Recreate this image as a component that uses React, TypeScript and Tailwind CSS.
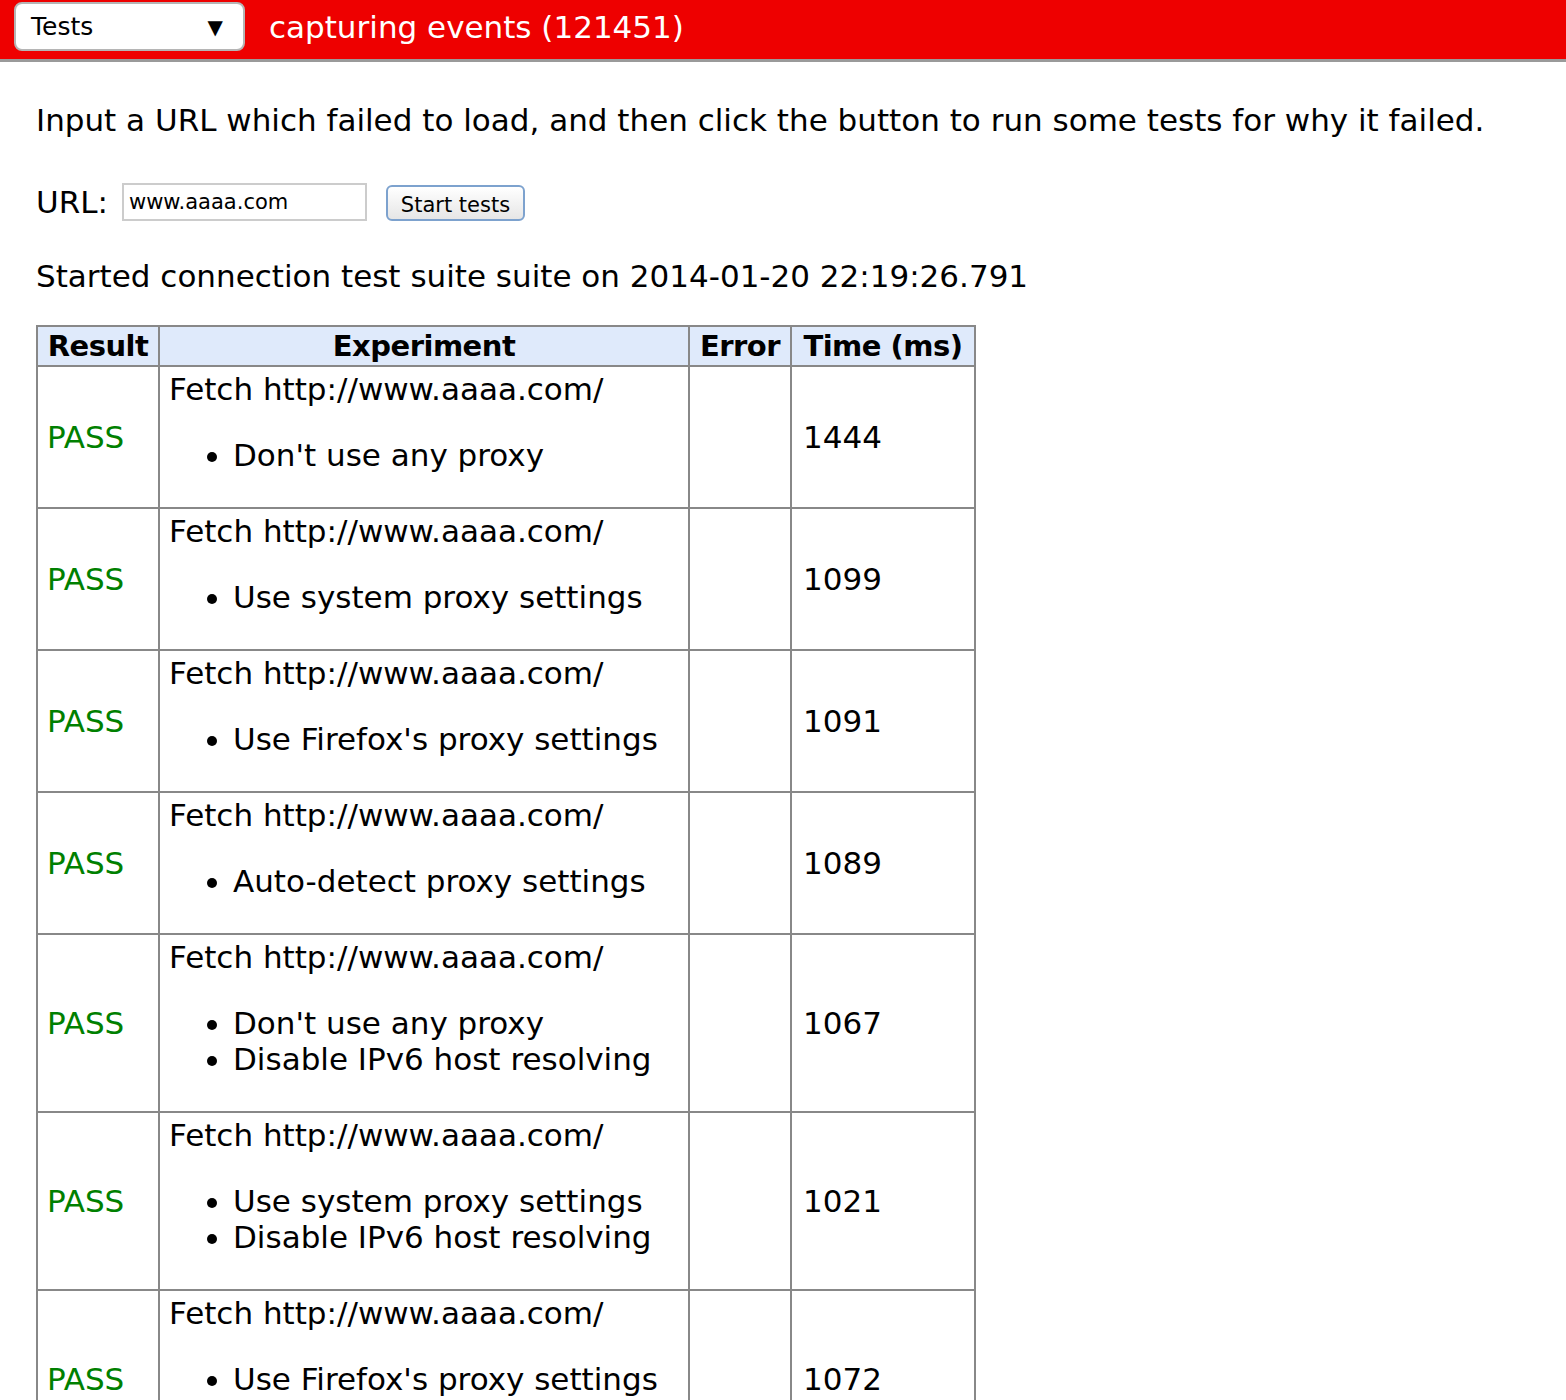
import React from 'react'

const ROWS: { opts: string[]; time: string }[] = [
  { opts: ["Don't use any proxy"], time: '1444' },
  { opts: ['Use system proxy settings'], time: '1099' },
  { opts: ["Use Firefox's proxy settings"], time: '1091' },
  { opts: ['Auto-detect proxy settings'], time: '1089' },
  { opts: ["Don't use any proxy", 'Disable IPv6 host resolving'], time: '1067' },
  { opts: ['Use system proxy settings', 'Disable IPv6 host resolving'], time: '1021' },
  { opts: ["Use Firefox's proxy settings", 'Disable IPv6 host resolving'], time: '1072' },
]

const cell = 'border-2 border-[#888888] px-[9px] py-[4px]'
const head = 'border-2 border-[#888888] px-0 py-[1px] whitespace-nowrap text-[29px] tracking-[-0.5px]'

export default function App() {
  return (
    <div className="min-h-[1400px] bg-white font-['DejaVu_Sans',sans-serif] text-black">
      <header className="flex h-[62px] items-start border-b-[3px] border-[#9a9a9a] bg-[#ee0000]">
        <div className="ml-[14px] mt-[2px] flex h-[49px] w-[231px] items-center justify-between rounded-[8px] border-2 border-[#b5b5b5] bg-white pl-[15px] pr-[20px] text-[25px]">
          <span>Tests</span>
          <span className="text-[20px]">▼</span>
        </div>
        <h1 className="ml-[24px] mt-[7px] text-[31px] leading-[40px] text-white">
          capturing events (121451)
        </h1>
      </header>

      <main className="px-[36px] text-[31px] leading-[36px]">
        <p className="mt-[40px]">
          Input a URL which failed to load, and then click the button to run some tests for why it failed.
        </p>

        <div className="mt-[44px] flex items-center">
          <span>URL:</span>
          <div className="ml-[14px] flex h-[38px] w-[245px] items-center border-2 border-[#cccccc] px-[5px] text-[21px]">
            www.aaaa.com
          </div>
          <button className="ml-[19px] mt-[3px] flex h-[36px] w-[139px] items-center justify-center rounded-[6px] border-2 border-[#7da2ce] bg-gradient-to-b from-white to-[#e6e6e6] pt-[3px] text-[21px]">
            Start tests
          </button>
        </div>

        <p className="mt-[37px]">Started connection test suite suite on 2014-01-20 22:19:26.791</p>

        <table className="mt-[31px] w-[940px] table-fixed border-collapse">
          <colgroup>
            <col className="w-[122px]" />
            <col className="w-[530px]" />
            <col className="w-[102px]" />
            <col className="w-[184px]" />
          </colgroup>
          <thead>
            <tr className="bg-[#dfeafb] font-bold">
              <th className={head}>Result</th>
              <th className={head}>Experiment</th>
              <th className={head}>Error</th>
              <th className={head}>Time (ms)</th>
            </tr>
          </thead>
          <tbody>
            {ROWS.map((r, i) => (
              <tr key={i}>
                <td className={`${cell} text-[#008000]`}>PASS</td>
                <td className={`${cell} align-top whitespace-nowrap`}>
                  <div>Fetch http://www.aaaa.com/</div>
                  <ul className="my-[30px] list-disc pl-[64px]">
                    {r.opts.map(o => (
                      <li key={o}>{o}</li>
                    ))}
                  </ul>
                </td>
                <td className={cell}></td>
                <td className={`${cell} px-[11px]`}>{r.time}</td>
              </tr>
            ))}
          </tbody>
        </table>
      </main>
    </div>
  )
}
